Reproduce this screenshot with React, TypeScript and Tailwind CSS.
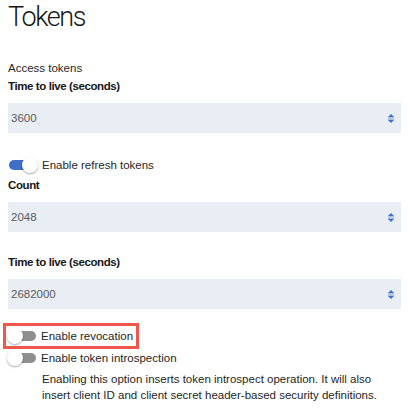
import React from "react";

function Toggle({ on }: { on: boolean }) {
  return (
    <span className="relative block w-[30px] h-[16px] shrink-0">
      <span
        className={
          "absolute top-[3px] h-[10px] rounded-full " +
          (on ? "left-[1px] right-[3px] bg-[#3d6fc6]" : "left-[2px] right-[1px] bg-[#8e8e8e]")
        }
      />
      <span
        className={
          "absolute top-0 w-[16px] h-[16px] rounded-full bg-white shadow-[0_1px_2px_rgba(0,0,0,0.35)] " +
          (on ? "left-[14px]" : "left-0")
        }
      />
    </span>
  );
}

function Spinner() {
  return (
    <svg width="8" height="11" viewBox="0 0 8 11" className="shrink-0">
      <polygon points="1,4 4,1 7,4" fill="#3d6fc6" />
      <rect x="1" y="4.4" width="6" height="0.9" fill="#86a4da" />
      <rect x="1" y="5.8" width="6" height="0.9" fill="#86a4da" />
      <polygon points="1,7 4,10 7,7" fill="#3d6fc6" />
    </svg>
  );
}

function NumberField({ value }: { value: string }) {
  return (
    <div className="flex items-center justify-between h-[30px] bg-[#e9eef5] pl-[3px] pr-[6px]">
      <span className="text-[11.5px] leading-[16px] text-[#5a5a5a]">{value}</span>
      <Spinner />
    </div>
  );
}

function Label({ children, className = "" }: { children: React.ReactNode; className?: string }) {
  return (
    <div className={"text-[11.5px] leading-[16px] font-bold tracking-[-0.4px] text-[#161616] " + className}>
      {children}
    </div>
  );
}

export default function App() {
  return (
    <div
      className="w-[410px] h-[409px] overflow-hidden bg-white pl-[8px] pr-[9px] text-[#222]"
      style={{ fontFamily: '"Liberation Sans", Arial, sans-serif' }}
    >
      <h1
        className="text-[27px] leading-[34px] font-light text-[#161616] tracking-[-1.4px]"
        style={{ fontFamily: "Roboto, sans-serif" }}
      >
        Tokens
      </h1>

      <div className="mt-[26px] text-[11.5px] leading-[16px] text-[#262626]">Access tokens</div>
      <Label className="mt-[2px]">Time to live (seconds)</Label>
      <div className="mt-[9px]">
        <NumberField value="3600" />
      </div>

      <div className="mt-[24px] flex items-center gap-[4px] h-[16px]">
        <Toggle on />
        <span className="text-[11.5px] leading-[16px] text-[#262626]">Enable refresh tokens</span>
      </div>
      <Label className="mt-[4px]">Count</Label>
      <div className="mt-[9px]">
        <NumberField value="2048" />
      </div>

      <Label className="mt-[22px]">Time to live (seconds)</Label>
      <div className="mt-[9px]">
        <NumberField value="2682000" />
      </div>

      <div className="mt-[14px] -ml-[5px] w-[136px] h-[26px] border-[3px] border-[#f2564a] flex items-center gap-[4px] pl-[1px] whitespace-nowrap">
        <Toggle on={false} />
        <span className="text-[11.5px] leading-[16px] text-[#262626]">Enable revocation</span>
      </div>

      <div className="mt-[1px] flex items-center gap-[4px] h-[16px] -ml-[1px]">
        <Toggle on={false} />
        <span className="text-[11.5px] leading-[16px] text-[#262626]">Enable token introspection</span>
      </div>
      <p className="mt-[5px] ml-[34px] text-[11.5px] leading-[16px] text-[#262626]">
        Enabling this option inserts token introspect operation. It will also insert client ID and client secret
        header-based security definitions.
      </p>
    </div>
  );
}
